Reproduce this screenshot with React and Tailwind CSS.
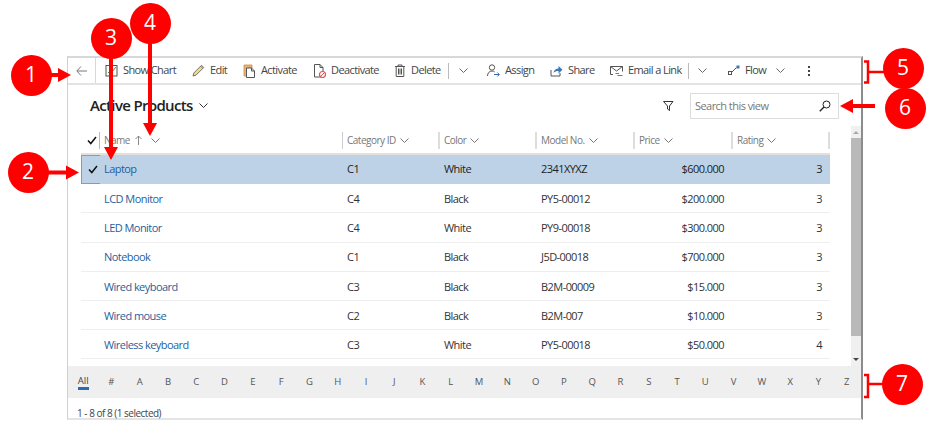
import { useState } from "react";

const font = "font-['Open_Sans','Liberation_Sans',sans-serif]";

// toolbar icons, drawn to match the ribbon glyphs
function ChartIcon() {
  return (
    <svg width="13" height="13" viewBox="0 0 13 13" fill="none" className="shrink-0">
      <rect x="1" y="1.5" width="11" height="10.5" stroke="#555" />
      <path d="M3 9l2.500-2.500 1.500 1.500L11 3" stroke="#3f9a4a" />
    </svg>
  );
}

function PencilIcon() {
  return (
    <svg width="13" height="13" viewBox="0 0 13 13" fill="none" className="shrink-0">
      <path d="M1 12l.8-3L9.500 1.300l2.200 2.200L4 11.200z" fill="#f3d98b" stroke="#666" strokeWidth="0.9" />
      <path d="M8.600 2.200l2.200 2.200" stroke="#666" strokeWidth="0.9" />
    </svg>
  );
}

function ActivateIcon() {
  return (
    <svg width="13" height="14" viewBox="0 0 13 14" fill="none" className="shrink-0">
      <path d="M1 1h8v3H3.500v8H1z" fill="#e8b27a" stroke="#d08a45" strokeWidth="0.8" />
      <path d="M3.500 4h5l3 3v6.500h-8z" fill="#fff" stroke="#555" />
      <path d="M8.500 4v3h3" stroke="#555" />
    </svg>
  );
}

function DeactivateIcon() {
  return (
    <svg width="13" height="14" viewBox="0 0 13 14" fill="none" className="shrink-0">
      <path d="M1.500.5h5.500l3 3V13h-8.500z" fill="#fff" stroke="#555" />
      <path d="M7 .5v3h3" stroke="#555" />
      <circle cx="9.500" cy="10.500" r="3" fill="#fff" stroke="#d9534f" strokeWidth="1.200" />
      <path d="M7.500 12.500l4-4" stroke="#d9534f" />
    </svg>
  );
}

function TrashIcon() {
  return (
    <svg width="12" height="13" viewBox="0 0 12 13" fill="none" className="shrink-0">
      <path d="M1 2.500h10M4 2.500V1h4v1.500M2.200 2.500V12.500h7.600V2.500M4.500 4.500v6M6 4.500v6M7.500 4.500v6" stroke="#555" />
    </svg>
  );
}

function AssignIcon() {
  return (
    <svg width="13" height="13" viewBox="0 0 13 13" fill="none" className="shrink-0">
      <circle cx="5" cy="3.500" r="2.700" stroke="#555" />
      <path d="M.5 12c0-3 2-5 4.500-5 1 0 2 .3 2.700 1" stroke="#555" />
      <path d="M7 10.500h5M10.300 8.500l2 2-2 2" stroke="#2b6cb0" />
    </svg>
  );
}

function ShareIcon() {
  return (
    <svg width="13" height="13" viewBox="0 0 13 13" fill="none" className="shrink-0">
      <path d="M1 6v6h9V9" stroke="#555" />
      <path d="M3.500 9c.3-3 2.500-4.500 5-4.500V2l4 3.800-4 3.800V7c-2 0-3.800.6-5 2z" fill="#3a78b8" />
    </svg>
  );
}

function EmailIcon() {
  return (
    <svg width="13" height="12" viewBox="0 0 13 12" fill="none" className="shrink-0">
      <path d="M3 9.500H.5v-8h12v5" stroke="#555" />
      <path d="M.5 1.500L6.500 6l6-4.500" stroke="#555" />
      <path d="M5.500 8.500h3.500M7.500 10.500h5" stroke="#777" />
    </svg>
  );
}

function FlowIcon() {
  return (
    <svg width="12" height="11" viewBox="0 0 12 11" fill="none" className="shrink-0">
      <rect x=".5" y="6.500" width="3" height="3" stroke="#555" />
      <path d="M3.500 7.500L8.500 2.500" stroke="#555" />
      <rect x="8.500" y=".5" width="3" height="3" fill="#3a78b8" />
    </svg>
  );
}

function Chevron({ className = "" }) {
  return (
    <svg width="9" height="5" viewBox="0 0 9 5" fill="none" className={`shrink-0 ${className}`}>
      <path d="M.5.500l4 4 4-4" stroke="currentColor" />
    </svg>
  );
}

function Check() {
  return (
    <svg width="10" height="9" viewBox="0 0 10 9" fill="none">
      <path d="M1 4.500l2.800 3L9 1" stroke="#111" strokeWidth="1.500" />
    </svg>
  );
}

function ToolButton({ icon, label, className }) {
  return (
    <div className={`flex items-center gap-[5px] ${className}`}>
      {icon}
      <span>{label}</span>
    </div>
  );
}

const columns = [
  { label: "Category ID" },
  { label: "Color" },
  { label: "Model No." },
  { label: "Price" },
  { label: "Rating" },
];

const products = [
  { name: "Laptop", cat: "C1", color: "White", model: "2341XYXZ", price: "$600.000", rating: 3, selected: true },
  { name: "LCD Monitor", cat: "C4", color: "Black", model: "PY5-00012", price: "$200.000", rating: 3 },
  { name: "LED Monitor", cat: "C4", color: "White", model: "PY9-00018", price: "$300.000", rating: 3 },
  { name: "Notebook", cat: "C1", color: "Black", model: "J5D-00018", price: "$700.000", rating: 3 },
  { name: "Wired keyboard", cat: "C3", color: "Black", model: "B2M-00009", price: "$15.000", rating: 3 },
  { name: "Wired mouse", cat: "C2", color: "Black", model: "B2M-007", price: "$10.000", rating: 3 },
  { name: "Wireless keyboard", cat: "C3", color: "White", model: "PY5-00018", price: "$50.000", rating: 4 },
];

const letters = "#ABCDEFGHIJKLMNOPQRSTUVWXYZ".split("");
const rowGrid = "grid grid-cols-[19px_243px_97px_97px_98px_98px_97px]";

export default function App() {
  const [selected] = useState(0);

  return (
    <div className={`relative w-[931px] h-[434px] overflow-hidden bg-white pt-[56px] pl-[67px] ${font}`}>
      <div className="w-[796px] h-[364px] flex flex-col border-t-2 border-l border-b-2 border-r-2 border-t-[#d8d8d8] border-l-[#d0d0d0] border-b-[#e4e4e4] border-r-[#8c8c8c] text-[#333]">
        {/* Toolbar */}
        <div className="h-[27px] shrink-0 flex items-center border-b-2 border-[#e4e4e4] text-[11px] tracking-[-0.600px] text-[#444]">
          <div className="w-[28px] h-full flex items-center justify-center border-r border-[#d8d8d8] shrink-0">
            <svg width="11" height="10" viewBox="0 0 11 10" fill="none">
              <path d="M11 5H1M5 .5L.8 5 5 9.500" stroke="#777" />
            </svg>
          </div>
          <ToolButton icon={<ChartIcon />} label="Show Chart" className="ml-[9px] w-[87px]" />
          <ToolButton icon={<PencilIcon />} label="Edit" className="w-[51px]" />
          <ToolButton icon={<ActivateIcon />} label="Activate" className="w-[70px]" />
          <ToolButton icon={<DeactivateIcon />} label="Deactivate" className="w-[81px]" />
          <ToolButton icon={<TrashIcon />} label="Delete" className="w-[54px]" />
          <div className="w-px h-[16px] bg-[#bbb]" />
          <Chevron className="ml-[10px] text-[#666]" />
          <ToolButton icon={<AssignIcon />} label="Assign" className="ml-[19px] w-[63px]" />
          <ToolButton icon={<ShareIcon />} label="Share" className="w-[60px]" />
          <ToolButton icon={<EmailIcon />} label="Email a Link" className="w-[78px]" />
          <div className="w-px h-[16px] bg-[#bbb]" />
          <Chevron className="ml-[9px] text-[#666]" />
          <ToolButton icon={<FlowIcon />} label="Flow" className="ml-[21px] w-[48px]" />
          <Chevron className="text-[#666]" />
          <span className="ml-[23px] flex flex-col gap-[2px]">
            <span className="w-[2px] h-[2px] bg-[#444]" />
            <span className="w-[2px] h-[2px] bg-[#444]" />
            <span className="w-[2px] h-[2px] bg-[#444]" />
          </span>
        </div>

        {/* View title and search */}
        <div className="h-[41px] shrink-0 flex items-center pl-[22px] pr-[22px]">
          <h1 className="text-[15px] tracking-[-0.650px] font-semibold text-[#222]">Active Products</h1>
          <Chevron className="ml-[6px] text-[#333]" />
          <svg width="11" height="10" viewBox="0 0 11 10" fill="none" className="ml-auto">
            <path d="M.5.500h9.500L6.500 5v4.500L4.500 8V5z" stroke="#333" />
          </svg>
          <div className="ml-[16px] w-[149px] h-[26px] flex items-center justify-between border border-[#ddd] pl-[4px] pr-[7px] text-[11px] tracking-[-0.550px] text-[#777]">
            <span className="pt-[1px]">Search this view</span>
            <svg width="12" height="12" viewBox="0 0 12 12" fill="none">
              <circle cx="7.500" cy="4.500" r="3.500" stroke="#222" />
              <path d="M5 7L.8 11.200" stroke="#222" strokeWidth="1.300" />
            </svg>
          </div>
        </div>

        {/* Grid + scrollbar */}
        <div className="h-[240px] shrink-0 flex pl-[13px]">
          <div className="w-[749px]">
            <div className={`${rowGrid} h-[29px] pt-[1px] items-center border-b-2 border-[#e6e0dc] text-[10px] tracking-[-0.500px] text-[#777]`}>
              <div className="h-[17px] flex items-center justify-center pl-[3px] border-r border-[#bbb]">
                <Check />
              </div>
              <div className="h-[17px] flex items-center pl-[4px] border-r border-[#ccc]">
                <span>Name</span>
                <svg width="7" height="10" viewBox="0 0 7 10" fill="none" className="ml-[5px] shrink-0">
                  <path d="M3.500 10V1M.5 4l3-3 3 3" stroke="#888" />
                </svg>
                <Chevron className="ml-[9px] text-[#777]" />
              </div>
              {columns.map((c) => (
                <div key={c.label} className="h-[17px] flex items-center gap-[4px] pl-[4px] border-r-2 border-[#ddd]">
                  <span>{c.label}</span>
                  <Chevron className="text-[#777]" />
                </div>
              ))}
            </div>
            {products.map((p, i) => (
              <div
                key={p.name}
                className={`${rowGrid} h-[29.200px] items-center text-[11px] tracking-[-0.550px] ${
                  i === selected ? "bg-[#bdd2e6] text-[#222]" : "border-b border-[#eeeeee] pt-[2px]"
                }`}
              >
                <div
                  className={`h-full flex items-center justify-center pl-[3px] ${
                    i === selected ? "border-l border-t border-b border-[#8e9aa6]" : ""
                  }`}
                >
                  {i === selected && <Check />}
                </div>
                <div className="pl-[4px] text-[#1f5f9c]">{p.name}</div>
                <div className="pl-[4px]">{p.cat}</div>
                <div className="pl-[4px]">{p.color}</div>
                <div className="pl-[4px]">{p.model}</div>
                <div className="pr-[9px] text-right">{p.price}</div>
                <div className="pr-[8px] text-right">{p.rating}</div>
              </div>
            ))}
          </div>
          <div className="ml-[21px] w-[12px] flex flex-col items-center bg-[#f0f0f0]">
            <div className="h-[12px] flex items-center justify-center">
              <div className="border-x-[3px] border-x-transparent border-b-[3px] border-b-[#aaa]" />
            </div>
            <div className="w-full h-[198px] bg-[#b9b9b9]" />
            <div className="flex-1 flex items-end pb-[5px]">
              <div className="border-x-[3px] border-x-transparent border-t-[3px] border-t-[#444]" />
            </div>
          </div>
        </div>

        {/* Jump bar */}
        <div className="h-[32px] shrink-0 flex items-center pl-[1px] bg-[#efefef] text-[9.500px] text-[#555]">
          <div className="w-[28.400px] flex justify-center">
            <span className="border-b-[3px] border-[#2b6cb0] leading-[12px] text-[#444]">All</span>
          </div>
          {letters.map((l) => (
            <span key={l} className="w-[28.400px] text-center">
              {l}
            </span>
          ))}
        </div>

        {/* Footer */}
        <div className="flex-1 flex items-center pl-[9px] pt-[8px] text-[10px] tracking-[-0.500px] text-[#444]">
          1 - 8 of 8 (1 selected)
        </div>
      </div>

      {/* Callouts over the screenshot */}
      <Callout n="1" x={31} y={75} />
      <Callout n="2" x={28} y={172} />
      <Callout n="3" x={111} y={38} />
      <Callout n="4" x={150} y={23} />
      <Callout n="5" x={903} y={68} />
      <Callout n="6" x={905} y={108} />
      <Callout n="7" x={902} y={384} />
      <svg width="931" height="434" viewBox="0 0 931 434" fill="none" className="absolute left-0 top-0 pointer-events-none">
        <path d="M50 75h10M28 172.500h40M111 58v90M150 40v84M845 106h30" stroke="#ff0000" strokeWidth="4" />
        <path d="M71 75l-13-7v14zM79 172.500l-13-7v14zM111 160l-7-13h14zM150 136l-7-13h14zM840 106l13-7v14z" fill="#ff0000" />
        <path d="M864 61.500h4v21h-4M868 72h16M864 375h4v22h-4M868 384h16" stroke="#ff0000" strokeWidth="2.500" />
      </svg>
    </div>
  );
}

function Callout({ n, x, y }) {
  return (
    <div
      className="absolute z-10 w-[41px] h-[41px] -ml-[20.500px] -mt-[20.500px] rounded-full bg-[#ff0000] flex items-center justify-center text-white text-[21px]"
      style={{ left: x, top: y }}
    >
      {n}
    </div>
  );
}
